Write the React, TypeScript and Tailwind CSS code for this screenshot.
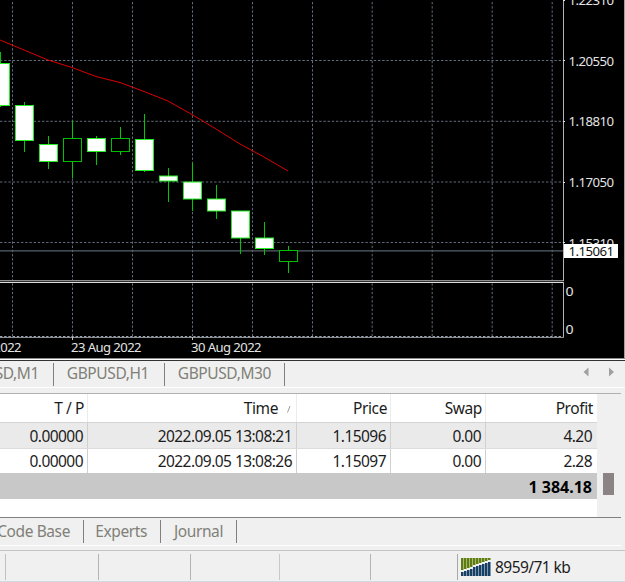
import React from 'react'
import clsx from 'clsx'

type Candle = {
  x: number
  high: number
  top: number
  bottom: number
  low: number
  up?: boolean
}

const candles: Candle[] = [
  { x: 0.5, high: 52, top: 63.5, bottom: 105.5, low: 107 },
  { x: 24.5, high: 102, top: 105.5, bottom: 140.5, low: 152 },
  { x: 48.5, high: 136, top: 144.5, bottom: 161.5, low: 169 },
  { x: 72.5, high: 121, top: 138.5, bottom: 161.5, low: 178, up: true },
  { x: 96.5, high: 136, top: 138.5, bottom: 151.5, low: 165 },
  { x: 120.5, high: 127, top: 138.5, bottom: 151.5, low: 155, up: true },
  { x: 144.5, high: 114, top: 139.5, bottom: 170.5, low: 172 },
  { x: 168.5, high: 168, top: 176, bottom: 181, low: 202 },
  { x: 192.5, high: 163, top: 182, bottom: 199, low: 211 },
  { x: 216.5, high: 185, top: 199, bottom: 211, low: 219 },
  { x: 240.5, high: 211, top: 211, bottom: 238, low: 254 },
  { x: 264.5, high: 222, top: 238, bottom: 248.5, low: 255 },
  { x: 288.5, high: 246, top: 250.5, bottom: 261.5, low: 273, up: true },
]

const average =
  '0,40 24,50 48,60 72,67.5 96,76.5 120,82.5 144,91.5 168,101 192,114.5 216,129 240,144 264,157 288,171'

const gridX = [12.5, 72.5, 132.5, 192.5, 252.5, 312.5, 372.2, 432.2, 492.2, 552.2]

const prices = [
  { label: '1.22310', y: 0 },
  { label: '1.20550', y: 60.5 },
  { label: '1.18810', y: 121.3 },
  { label: '1.17050', y: 182 },
  { label: '1.15310', y: 242.5 },
]

const Chart = () => {
  return (
    <svg
      width="625"
      height="361"
      viewBox="0 0 625 361"
      className="block shrink-0 bg-black font-['Noto_Sans',sans-serif] text-[13px]">
      <g stroke="#5f6b7a" strokeDasharray="2.4 1.8">
        {gridX.map((x) => (
          <line key={x} x1={x} x2={x} y1="2" y2="336" />
        ))}
        {prices.slice(1).map(({ y }) => (
          <line key={y} x1="0" x2="563" y1={y} y2={y} />
        ))}
      </g>
      <line x1="0" x2="563" y1="250.8" y2="250.8" stroke="#56616e" strokeWidth="1.3" />

      {candles.map(({ x, high, top, bottom, low, up }) => (
        <g key={x} stroke="#00c800">
          <line x1={x} x2={x} y1={high} y2={top} />
          <line x1={x} x2={x} y1={bottom} y2={low} />
          <rect
            x={x - 9}
            y={top}
            width="18"
            height={bottom - top}
            fill={up ? '#000' : '#fff'}
            stroke={up ? '#00c000' : '#22ee22'}
          />
        </g>
      ))}
      <polyline points={average} fill="none" stroke="#dc0000" />

      <rect x="0" y="280" width="564" height="1" fill="#8f8f8f" />
      <rect x="0" y="281" width="564" height="1" fill="#303030" />
      <rect x="0" y="282" width="564" height="1" fill="#dcdcdc" />
      <rect x="563" y="0" width="1" height="281" fill="#b4b4b4" />
      <rect x="563" y="282" width="1" height="55" fill="#b4b4b4" />
      <line x1="0" x2="564" y1="336.5" y2="336.5" stroke="#9aa5b5" strokeDasharray="2.4 1.8" />
      <rect x="0" y="337" width="564" height="1" fill="#8f8f8f" />
      {[72, 192].map((x) => (
        <rect key={x} x={x} y="337" width="1" height="3" fill="#c0c0c0" />
      ))}

      <g fill="#e4e4e4">
        {prices.map(({ label, y }) => (
          <React.Fragment key={label}>
            <rect x="563" y={Math.floor(y)} width="2" height="1" />
            <text x="568.5" y={y + 5} textLength="45" lengthAdjust="spacingAndGlyphs">
              {label}
            </text>
          </React.Fragment>
        ))}
        <text x="565.5" y="296" textLength="7.5" lengthAdjust="spacingAndGlyphs">
          0
        </text>
        <text x="565.5" y="334" textLength="7.5" lengthAdjust="spacingAndGlyphs">
          0
        </text>
        <text x="-49" y="352" textLength="70" lengthAdjust="spacingAndGlyphs">
          16 Aug 2022
        </text>
        <text x="71" y="352" textLength="70" lengthAdjust="spacingAndGlyphs">
          23 Aug 2022
        </text>
        <text x="191" y="352" textLength="70" lengthAdjust="spacingAndGlyphs">
          30 Aug 2022
        </text>
      </g>

      <rect x="564" y="244" width="54" height="14" fill="#fff" />
      <text x="568.5" y="256" textLength="45" lengthAdjust="spacingAndGlyphs" fill="#111">
        1.15061
      </text>

      <rect x="624" y="0" width="1" height="359" fill="#a0a0a0" />
      <rect x="0" y="358" width="625" height="1" fill="#8c8c8c" />
      <rect x="0" y="359" width="625" height="1" fill="#fff" />
      <rect x="0" y="360" width="625" height="1" fill="#333" />
    </svg>
  )
}

const Tab = ({ label, className }: { label: string; className: string }) => {
  return (
    <div
      className={clsx(
        'flex h-[23px] shrink-0 items-center justify-end border-r border-[#808080] tracking-[-0.4px] whitespace-nowrap text-[#808078]',
        className
      )}>
      {label}
    </div>
  )
}

type RowProps = {
  cells: string[]
  header?: boolean
  className: string
}
const widths = ['w-[88px]', 'w-[209px]', 'w-[94px]', 'w-[95px]', 'w-[111px]']

const Row = ({ cells, header, className }: RowProps) => {
  return (
    <div className={clsx('flex text-[#1c1c1c]', className)}>
      {cells.map((cell, i) => (
        <div
          key={i}
          className={clsx(
            'flex shrink-0 items-center justify-end whitespace-nowrap',
            widths[i],
            i < 4 && 'border-r',
            i < 4 && (header ? 'pr-[3px]' : 'pr-1'),
            i === 4 && (header ? 'pr-1' : 'pr-[5px]'),
            header ? 'border-[#ececec] pt-0.5' : 'border-[#d0d0d0] pt-0.5'
          )}>
          {cell}
          {header && i === 1 && (
            <svg width="9" height="8" viewBox="0 0 9 8" className="ml-1.5" stroke="#909090">
              <path d="M3.5 7.5 L6 1" strokeWidth="0.9" fill="none" />
            </svg>
          )}
        </div>
      ))}
    </div>
  )
}

const bars = [12, 11, 10, 9, 7, 6, 5, 4, 3, 2]

const SignalIcon = () => {
  return (
    <svg width="30" height="18" viewBox="0 0 30 18" className="shrink-0">
      {bars.map((h, i) => (
        <g key={i}>
          <rect x={i * 3} y="0" width="2.5" height={h} fill="#5d7d0c" />
          <rect x={i * 3} y={h + 2} width="2.5" height={16 - h} fill="#163f66" />
        </g>
      ))}
    </svg>
  )
}

export default function App() {
  return (
    <div className="flex h-[582px] w-[625px] flex-col overflow-hidden bg-[#f0f0f0] font-['Noto_Sans',sans-serif] text-[15.5px] tracking-[-0.55px]">
      <Chart />

      <div className="flex h-[27px] shrink-0 items-center justify-between border-b border-white">
        <div className="flex">
          <Tab label="GBPUSD,M1" className="w-[54px] pr-[14px]" />
          <Tab label="GBPUSD,H1" className="w-[111px] pr-[15px]" />
          <Tab label="GBPUSD,M30" className="w-[120px] pr-[13px]" />
        </div>
        <svg width="34" height="10" viewBox="0 0 34 10" className="mr-[9px] mb-1" fill="#a0a0a0">
          <path d="M6.5 .5v9L1.5 5z" />
          <path d="M27 .5v9L32 5z" />
        </svg>
      </div>

      <div className="mt-[5px] flex h-[125px] w-[621px] shrink-0 border-t border-b border-t-[#b0b0b0] border-b-[#808080]">
        <div className="flex w-[597px] flex-col bg-white">
          <Row
            header
            cells={['T / P', 'Time', 'Price', 'Swap', 'Profit']}
            className="h-[29px] border-b border-[#d4d4d4] tracking-[-0.4px]"
          />
          <Row
            cells={['0.00000', '2022.09.05 13:08:21', '1.15096', '0.00', '4.20']}
            className="h-[26px] border-b border-[#dcdcdc] bg-[#eaeaea]"
          />
          <Row
            cells={['0.00000', '2022.09.05 13:08:26', '1.15097', '0.00', '2.28']}
            className="h-6"
          />
          <div className="flex h-[26px] items-center justify-end bg-[#c8c8c8] pr-[5px] pt-px text-base font-bold tracking-normal text-black">
            1 384.18
          </div>
        </div>
        <div className="flex flex-1 flex-col pt-[79px] pl-1.5">
          <div className="h-[22px] w-[11px] bg-[#8a8584]" />
        </div>
      </div>

      <div className="flex h-[28px] w-[621px] shrink-0 items-center border-b border-white">
        <Tab label="Code Base" className="w-[84px] pr-[13px]" />
        <Tab label="Experts" className="w-[77px] pr-[13px]" />
        <Tab label="Journal" className="w-[76px] pr-[13px]" />
      </div>

      <div className="mt-1 flex flex-1 border-t border-b border-t-[#c4c4c4] border-b-[#d3dbe2] pt-[3px] pb-px">
        <div className="w-1.5 border-r border-[#c0c0c0]" />
        <div className="w-[93px] border-r border-[#b4b4b4]" />
        <div className="w-[92px] border-r border-[#b4b4b4]" />
        <div className="w-[89px] border-r border-[#c8c8c4]" />
        <div className="w-[91px] border-r border-[#b4b4b4]" />
        <div className="w-[87px] border-r border-[#a8a8a8]" />
        <div className="flex items-center gap-1 pl-[3px] text-[#1c1c1c]">
          <SignalIcon />
          <span className="pt-0.5">8959/71 kb</span>
        </div>
      </div>
    </div>
  )
}
